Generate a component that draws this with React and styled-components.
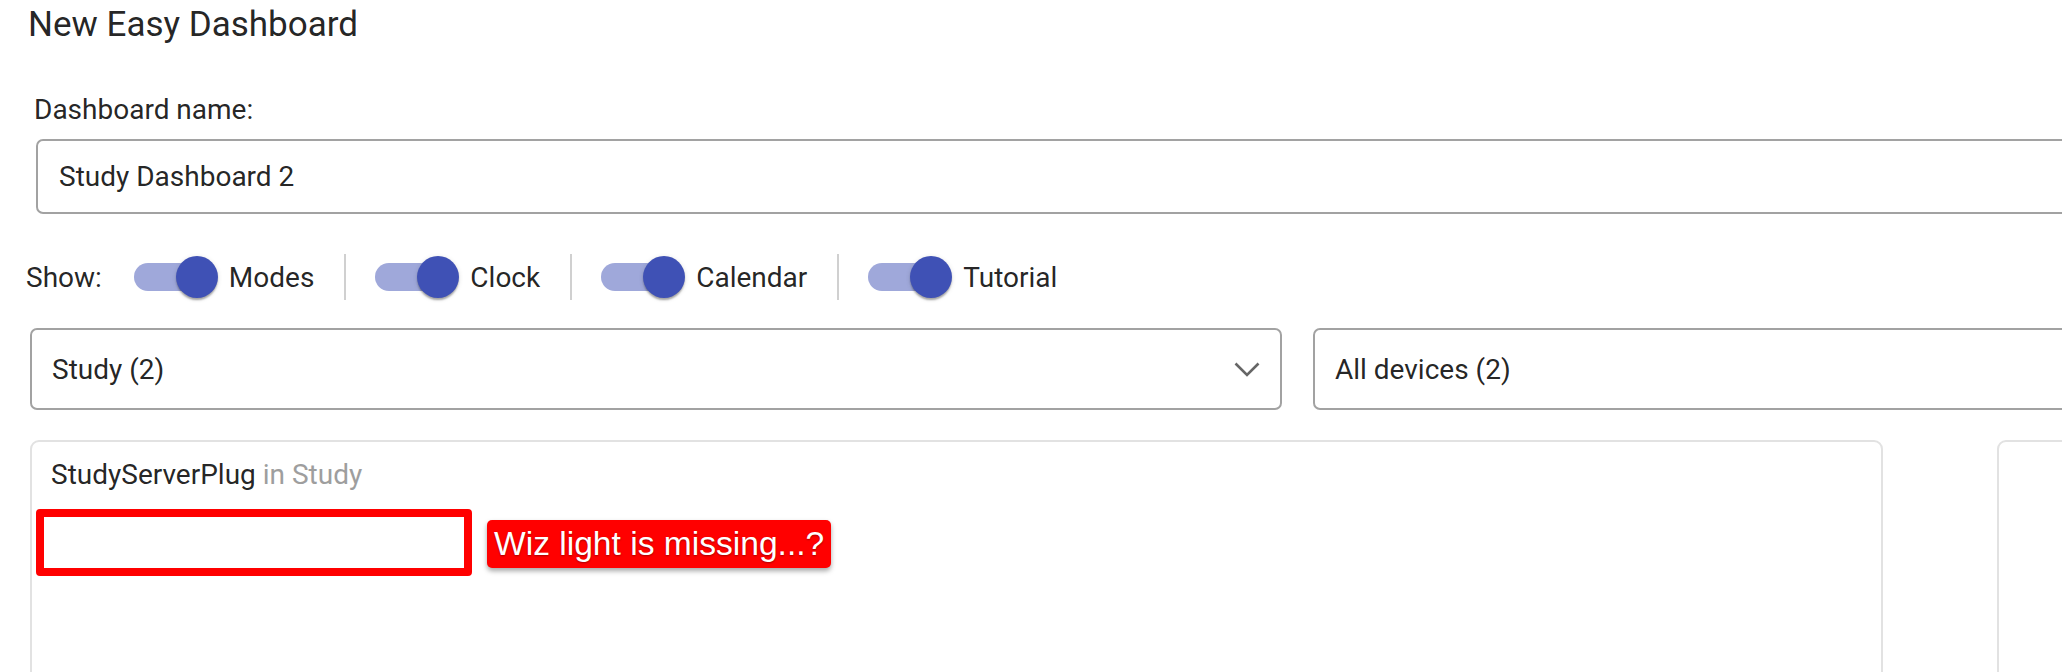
import React from "react";
import styled, { createGlobalStyle } from "styled-components";

const Global = createGlobalStyle`
  html, body { margin: 0; padding: 0; background: #fff; overflow: hidden; }
  body { font-family: Roboto, "Liberation Sans", sans-serif; color: rgba(0,0,0,0.87); }
  * { box-sizing: border-box; }
`;

const Page = styled.div`
  width: 2062px;
  height: 672px;
  overflow: hidden;
  padding-left: 26px;
`;

const Title = styled.h1`
  margin: 0 0 0 2px;
  padding-top: 5px;
  font-size: 35px;
  line-height: 40px;
  font-weight: 400;
  white-space: nowrap;
`;

const FieldLabel = styled.div`
  margin: 49px 0 0 8px;
  font-size: 28px;
  line-height: 32px;
  white-space: nowrap;
`;

const TextField = styled.div`
  margin: 13px 0 0 10px;
  width: 2200px;
  height: 75px;
  border: 2px solid #a2a2a2;
  border-radius: 7px;
  display: flex;
  align-items: center;
  padding-left: 21px;
  font-size: 28px;
`;

const ShowRow = styled.div`
  margin-top: 39px;
  height: 48px;
  display: flex;
  align-items: center;
  font-size: 28px;
  white-space: nowrap;
`;

const ShowLabel = styled.span`
  margin-right: 32px;
`;

const ToggleGroup = styled.label`
  display: flex;
  align-items: center;
  gap: 11px;
`;

const SwitchRoot = styled.span`
  position: relative;
  width: 84px;
  height: 42px;
  flex: none;
`;

const Track = styled.span`
  position: absolute;
  left: 0;
  top: 7px;
  width: 76px;
  height: 28px;
  border-radius: 14px;
  background: ${(p) => (p.$on ? "#9fa8da" : "#bdbdbd")};
`;

const Thumb = styled.span`
  position: absolute;
  top: 0;
  left: ${(p) => (p.$on ? "42px" : "0")};
  width: 42px;
  height: 42px;
  border-radius: 50%;
  background: ${(p) => (p.$on ? "#3f51b5" : "#fafafa")};
  box-shadow: 0 3px 2px -1px rgba(0,0,0,0.2), 0 2px 2px 0 rgba(0,0,0,0.14), 0 1px 5px 0 rgba(0,0,0,0.12);
`;

const Divider = styled.span`
  width: 2px;
  height: 46px;
  background: #d0d0d0;
  margin: 0 29px 0 30px;
`;

const SelectRow = styled.div`
  margin: 27px 0 0 4px;
  display: grid;
  grid-template-columns: 1252px 1252px;
  gap: 31px;
`;

const Select = styled.div`
  height: 82px;
  border: 2px solid #a2a2a2;
  border-radius: 7px;
  display: flex;
  align-items: center;
  justify-content: space-between;
  padding: 0 20px 0 20px;
  font-size: 28px;
  white-space: nowrap;
`;

const Chevron = styled.svg`
  width: 26px;
  height: 15px;
  flex: none;
`;

const CardRow = styled.div`
  margin: 30px 0 0 4px;
  display: grid;
  grid-template-columns: 1853px 1853px;
  gap: 114px;
`;

const Card = styled.div`
  position: relative;
  height: 400px;
  border: 2px solid #e2e2e2;
  border-radius: 9px;
  padding: 17px 19px;
`;

const CardTitle = styled.div`
  font-size: 28px;
  line-height: 32px;
  white-space: nowrap;
`;

const Room = styled.span`
  color: #9e9e9e;
`;

const MissingBox = styled.div`
  position: absolute;
  left: 4px;
  top: 67px;
  width: 436px;
  height: 67px;
  border: 8px solid #ff0000;
  border-radius: 4px;
`;

const MissingNote = styled.div`
  position: absolute;
  left: 455px;
  top: 78px;
  height: 48px;
  padding: 0 7px;
  display: flex;
  align-items: center;
  background: #ff0000;
  color: #fff;
  border-radius: 5px;
  font-family: "Liberation Sans", Arial, sans-serif;
  font-size: 33.6px;
  white-space: nowrap;
  box-shadow: 0 3px 5px rgba(0,0,0,0.35);
  text-shadow: 0 1px 2px rgba(0,0,0,0.35);
`;

function Switch({ on }) {
  return (
    <SwitchRoot>
      <Track $on={on} />
      <Thumb $on={on} />
    </SwitchRoot>
  );
}

const toggles = ["Modes", "Clock", "Calendar", "Tutorial"];

export default function App() {
  return (
    <>
      <Global />
      <Page>
        <Title>New Easy Dashboard</Title>
        <FieldLabel>Dashboard name:</FieldLabel>
        <TextField>Study Dashboard 2</TextField>
        <ShowRow>
          <ShowLabel>Show:</ShowLabel>
          {toggles.map((t, i) => (
            <React.Fragment key={t}>
              {i > 0 && <Divider />}
              <ToggleGroup>
                <Switch on />
                <span>{t}</span>
              </ToggleGroup>
            </React.Fragment>
          ))}
        </ShowRow>
        <SelectRow>
          <Select>
            <span>Study (2)</span>
            <Chevron viewBox="0 0 26 15">
              <path d="M1.5 1.5 L13 13 L24.5 1.5" fill="none" stroke="#666" strokeWidth="2.6" />
            </Chevron>
          </Select>
          <Select>
            <span>All devices (2)</span>
          </Select>
        </SelectRow>
        <CardRow>
          <Card>
            <CardTitle>
              StudyServerPlug <Room>in Study</Room>
            </CardTitle>
            <MissingBox />
            <MissingNote>Wiz light is missing...?</MissingNote>
          </Card>
          <Card />
        </CardRow>
      </Page>
    </>
  );
}
